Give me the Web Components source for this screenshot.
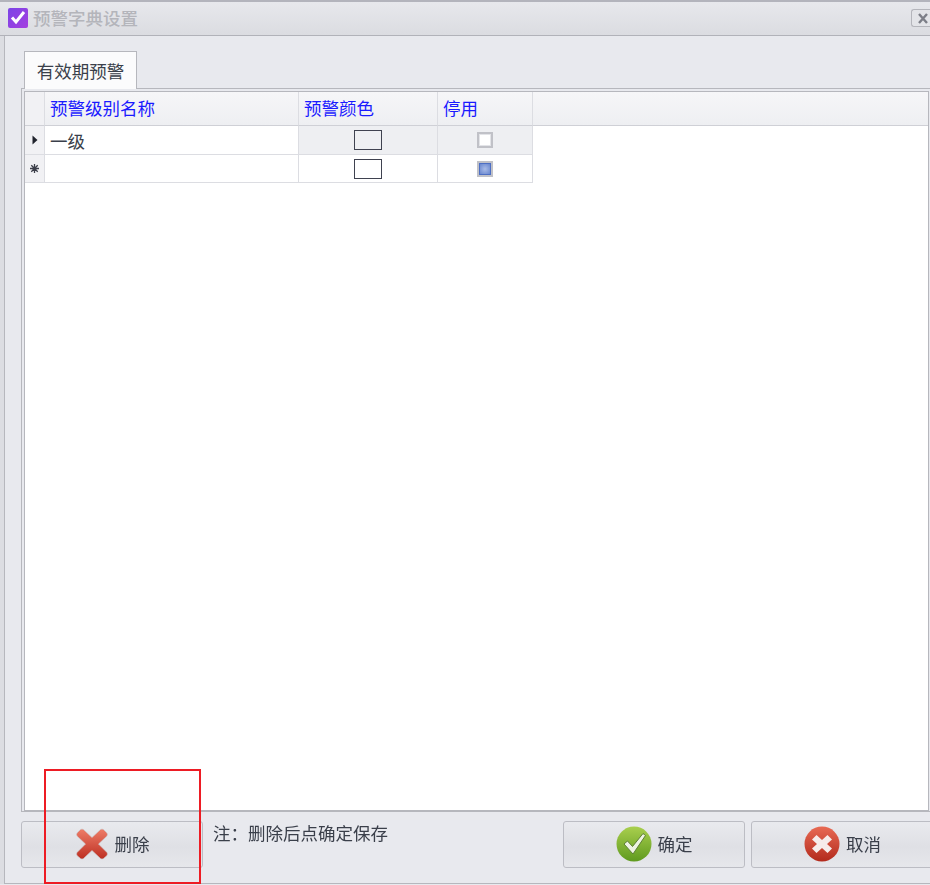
<!DOCTYPE html>
<html>
<head>
<meta charset="utf-8">
<style>
	html, body {
		margin: 0;
		width: 930px;
		height: 885px;
		overflow: hidden;
		background: #e8e9ee;
		font: 17.5px "Noto Sans CJK SC", "Liberation Sans", sans-serif;
		color: #3a3f4a;
	}
</style>
</head>
<body>
<dialog-window caption="预警字典设置">
	<tab-panel label="有效期预警">
		<warn-grid></warn-grid>
	</tab-panel>
	<dialog-footer></dialog-footer>
</dialog-window>

<script>
class DialogWindow extends HTMLElement {
	constructor() {
		super();
		this.attachShadow({ mode: 'open' });
	}

	connectedCallback() {
		const caption = this.getAttribute('caption');
		this.shadowRoot.innerHTML = `
			<style>
				:host {
					display: flex;
					flex-direction: column;
					position: relative;
					width: 930px;
					height: 885px;
					box-sizing: border-box;
					overflow: hidden;
					filter: blur(0.35px);
				}
				.title {
					display: flex;
					align-items: center;
					height: 36px;
					flex: none;
					box-sizing: border-box;
					padding-left: 8px;
					gap: 5px;
					border-top: 2px solid #b3b4bc;
					border-bottom: 1px solid #b1b2b9;
					background: linear-gradient(#e7e8ec, #dbdce1);
					color: #b4b5bb;
					font-weight: 500;
				}
				.title svg { flex: none; margin-top: -2px; }
				.title span { flex: 1; margin-top: -2px; line-height: 24px; }
				.close {
					flex: none;
					width: 19px;
					height: 18px;
					box-sizing: border-box;
					margin: -2px 0 0 0;
					border: 1px solid #b4b5bb;
					border-right: 0;
					border-radius: 3px 0 0 3px;
					background: #e3e4e8;
					overflow: hidden;
				}
				.close svg { display: block; margin: 3px 0 0 6px; }
				.client {
					flex: 1;
					display: flex;
					flex-direction: column;
					min-height: 0;
					margin: 0 0 1px 4px;
					border-left: 1px solid #b6b7bd;
					border-bottom: 1px solid #b6b7bd;
					box-shadow: -4px 0 0 #dcdde2;
					padding: 15px 0 0 16px;
					background: #e8e9ee;
				}
				.mark {
					position: absolute;
					left: 44px;
					top: 769px;
					width: 157px;
					height: 115px;
					box-sizing: border-box;
					border: 2px solid #ed1c24;
				}
			</style>
			<div class="title">
				<svg width="20" height="20" viewBox="0 0 20 20">
					<defs>
						<linearGradient id="tick" x1="0" y1="0" x2="1" y2="1">
							<stop offset="0" stop-color="#7b45e6"/>
							<stop offset="1" stop-color="#a63fe0"/>
						</linearGradient>
					</defs>
					<rect width="20" height="20" rx="2" fill="url(#tick)"/>
					<path d="M4 9.5l4 4.5 8-10" fill="none" stroke="#fff" stroke-width="3"/>
				</svg>
				<span>${caption}</span>
				<div class="close">
					<svg width="14" height="12" viewBox="0 0 14 12"><path d="M1 1l8 9M9 1l-8 9" fill="none" stroke="#7d7f88" stroke-width="2.4"/></svg>
				</div>
			</div>
			<div class="client"><slot></slot></div>
			<div class="mark"></div>
		`;
	}
}

class TabPanel extends HTMLElement {
	constructor() {
		super();
		this.attachShadow({ mode: 'open' });
	}

	connectedCallback() {
		const label = this.getAttribute('label');
		this.shadowRoot.innerHTML = `
			<style>
				:host {
					display: flex;
					flex-direction: column;
					height: 761px;
					flex: none;
				}
				.head {
					display: flex;
					height: 37px;
					flex: none;
					box-sizing: border-box;
					padding-left: 3px;
					position: relative;
					z-index: 1;
				}
				.tab {
					width: 113px;
					height: 38px;
					box-sizing: border-box;
					border: 1px solid #b6b7bd;
					border-bottom: 0;
					background: #fbfbfc;
					color: #3a3f4a;
					text-align: center;
					padding-top: 6px;
					line-height: 26px;
				}
				.page {
					flex: 1;
					display: flex;
					min-height: 0;
					box-sizing: border-box;
					border: 1px solid #b6b7bd;
					border-right: 0;
					padding: 2px 1px 0 2px;
					background: #e8e9ee;
				}
			</style>
			<div class="head"><div class="tab">${label}</div></div>
			<div class="page"><slot></slot></div>
		`;
	}
}

class WarnGrid extends HTMLElement {
	constructor() {
		super();
		this.attachShadow({ mode: 'open' });
	}

	connectedCallback() {
		const swatch = '<i class="swatch"></i>';
		this.shadowRoot.innerHTML = `
			<style>
				:host {
					display: block;
					flex: 1;
					box-sizing: border-box;
					border: 1px solid #b6b7bd;
					background: #fff;
				}
				.grid {
					display: grid;
					grid-template-columns: 20px 254px 139px 95px 1fr;
					grid-template-rows: 34px 29px 28px;
				}
				.cell {
					display: flex;
					align-items: center;
					box-sizing: border-box;
					border-right: 1px solid #dcdde2;
					border-bottom: 1px solid #dcdde2;
					padding-left: 5px;
					color: #3a3f4a;
				}
				.head {
					background: linear-gradient(#f6f6f8, #eeeff2);
					border-bottom-color: #cfd0d6;
					color: #1a1aff;
					padding-bottom: 3px;
				}
				.head.last { border-right: 0; }
				.rowhead { background: #f1f1f4; padding: 0; justify-content: center; }
				.center { justify-content: center; padding: 0; }
				.selected { background: #eeeff2; }
				.blank { border: 0; }
				.swatch {
					display: block;
					width: 28px;
					height: 20px;
					box-sizing: border-box;
					border: 1px solid #3f4250;
				}
				.check {
					display: block;
					width: 16px;
					height: 16px;
					box-sizing: border-box;
					border: 2px solid #c0c1c7;
					background: #fff;
				}
				.check.off { box-shadow: inset 0 0 0 1px #e3e4e8; }
				.check.on {
					background: radial-gradient(circle, #a9bce8, #5b7bc9);
					box-shadow: inset 0 0 0 1px #4d6fc4;
				}
			</style>
			<div class="grid">
				<div class="cell head rowhead"></div>
				<div class="cell head">预警级别名称</div>
				<div class="cell head">预警颜色</div>
				<div class="cell head">停用</div>
				<div class="cell head last"></div>

				<div class="cell rowhead">
					<svg width="6" height="10" viewBox="0 0 6 10"><path d="M0.5 0.5L5.5 5L0.5 9.5Z" fill="#20232c"/></svg>
				</div>
				<div class="cell">一级</div>
				<div class="cell center selected">${swatch}</div>
				<div class="cell center selected"><i class="check off"></i></div>
				<div class="blank"></div>

				<div class="cell rowhead">
					<svg width="9" height="9" viewBox="0 0 9 9"><path d="M4.5 0v9M0 4.5h9M1.3 1.3l6.4 6.4M7.7 1.3l-6.4 6.4" stroke="#3b3e49" stroke-width="1.3" fill="none"/></svg>
				</div>
				<div class="cell"></div>
				<div class="cell center">${swatch}</div>
				<div class="cell center"><i class="check on"></i></div>
				<div class="blank"></div>
			</div>
		`;
	}
}

class DialogButton extends HTMLElement {
	constructor() {
		super();
		this.attachShadow({ mode: 'open' });
		this.shadowRoot.innerHTML = `
			<style>
				:host {
					display: flex;
					align-items: center;
					justify-content: center;
					gap: 6px;
					flex: none;
					height: 47px;
					box-sizing: border-box;
					padding-bottom: 2px;
					border: 1px solid #bcbdc4;
					border-radius: 3px;
					background: linear-gradient(#e9eaee, #dfe0e5 55%, #e6e7eb);
					color: #3a3f4a;
				}
				span { line-height: 24px; }
			</style>
			<slot name="icon"></slot>
			<span><slot></slot></span>
		`;
	}
}

class DialogFooter extends HTMLElement {
	constructor() {
		super();
		this.attachShadow({ mode: 'open' });
		this.shadowRoot.innerHTML = `
			<style>
				:host {
					display: flex;
					align-items: flex-start;
					flex: none;
					padding-top: 9px;
				}
				dialog-button.del { width: 182px; }
				dialog-button.ok { width: 182px; margin-right: 6px; }
				dialog-button.no { width: 183px; margin-right: -4px; }
				.note { flex: 1; padding: 0 0 0 10px; line-height: 24px; }
			</style>
			<dialog-button class="del">
				<svg slot="icon" width="34" height="32" viewBox="0 0 34 32">
					<defs>
						<linearGradient id="cross" x1="0" y1="0" x2="0" y2="1">
							<stop offset="0" stop-color="#ee7d68"/>
							<stop offset="1" stop-color="#bd2f22"/>
						</linearGradient>
					</defs>
					<path d="M8.5 1.5L17 9.5L25.5 1.5Q27 0.5 28.5 1.5L32 5Q33 6.5 32 8L23.5 16L32 24.500Q33 26 32 27.500L28.500 30.500Q27 31.500 25.500 30.500L17 22.500L8.500 30.500Q7 31.500 5.500 30.500L2 27.500Q1 26 2 24.500L10.500 16L2 8Q1 6.500 2 5L5.500 1.500Q7 0.500 8.500 1.500Z" fill="url(#cross)" stroke="#c9c9cc" stroke-width="0.6"/>
				</svg>
				删除
			</dialog-button>
			<div class="note">注：删除后点确定保存</div>
			<dialog-button class="ok">
				<svg slot="icon" width="36" height="36" viewBox="0 0 36 36">
					<defs>
						<linearGradient id="green" x1="0" y1="0" x2="0" y2="1">
							<stop offset="0" stop-color="#a9cf4e"/>
							<stop offset="1" stop-color="#5f9a1e"/>
						</linearGradient>
					</defs>
					<circle cx="18" cy="18" r="17.500" fill="url(#green)"/>
					<path d="M8 18l3.500-3 5 5.500L27 7.500l2.500 2L17 28Z" fill="#eef3e2" stroke="#5d7f35" stroke-width="1"/>
				</svg>
				确定
			</dialog-button>
			<dialog-button class="no">
				<svg slot="icon" width="36" height="36" viewBox="0 0 36 36">
					<defs>
						<linearGradient id="red" x1="0" y1="0" x2="0" y2="1">
							<stop offset="0" stop-color="#e86a54"/>
							<stop offset="1" stop-color="#b32a1c"/>
						</linearGradient>
					</defs>
					<circle cx="18" cy="18" r="17.500" fill="url(#red)"/>
					<path d="M12.500 9L18 14l5.500-5 4.500 4.500-5 4.500 5 4.500-4.500 4.500-5.500-5-5.500 5L8 22.500l5-4.500-5-4.500Z" fill="#f6ecea"/>
				</svg>
				取消
			</dialog-button>
		`;
	}
}

customElements.define('dialog-button', DialogButton);
customElements.define('dialog-footer', DialogFooter);
customElements.define('warn-grid', WarnGrid);
customElements.define('tab-panel', TabPanel);
customElements.define('dialog-window', DialogWindow);
</script>
</body>
</html>
